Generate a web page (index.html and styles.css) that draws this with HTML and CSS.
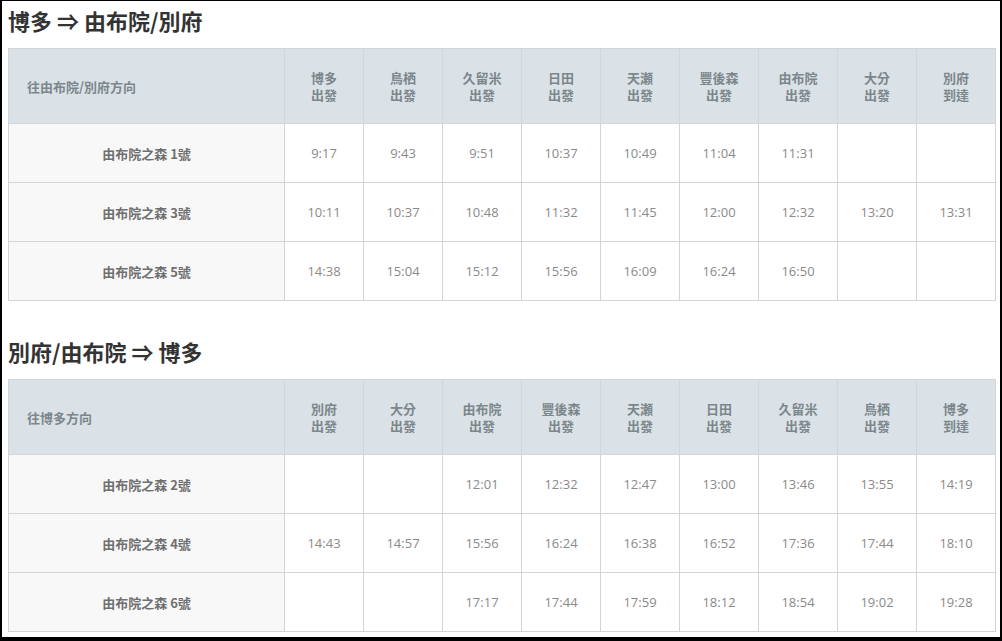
FILE: index.html
```html
<!DOCTYPE html>
<html lang="zh-Hant">
<head>
<meta charset="utf-8">
<title>由布院之森 時刻表</title>
<link rel="stylesheet" href="styles.css">
</head>
<body>
<div class="frame">
  <h2 class="title">博多 ⇒ 由布院/別府</h2>
  <table class="timetable">
    <colgroup><col class="c-name"><col span="9" class="c-time"></colgroup>
    <thead>
      <tr>
        <th class="dir">往由布院/別府方向</th>
        <th>博多<br>出發</th>
        <th>鳥栖<br>出發</th>
        <th>久留米<br>出發</th>
        <th>日田<br>出發</th>
        <th>天瀬<br>出發</th>
        <th>豐後森<br>出發</th>
        <th>由布院<br>出發</th>
        <th>大分<br>出發</th>
        <th>別府<br>到達</th>
      </tr>
    </thead>
    <tbody>
      <tr><td class="name">由布院之森 1號</td><td>9:17</td><td>9:43</td><td>9:51</td><td>10:37</td><td>10:49</td><td>11:04</td><td>11:31</td><td></td><td></td></tr>
      <tr><td class="name">由布院之森 3號</td><td>10:11</td><td>10:37</td><td>10:48</td><td>11:32</td><td>11:45</td><td>12:00</td><td>12:32</td><td>13:20</td><td>13:31</td></tr>
      <tr><td class="name">由布院之森 5號</td><td>14:38</td><td>15:04</td><td>15:12</td><td>15:56</td><td>16:09</td><td>16:24</td><td>16:50</td><td></td><td></td></tr>
    </tbody>
  </table>

  <h2 class="title title-second">別府/由布院 ⇒ 博多</h2>
  <table class="timetable">
    <colgroup><col class="c-name"><col span="9" class="c-time"></colgroup>
    <thead>
      <tr>
        <th class="dir">往博多方向</th>
        <th>別府<br>出發</th>
        <th>大分<br>出發</th>
        <th>由布院<br>出發</th>
        <th>豐後森<br>出發</th>
        <th>天瀬<br>出發</th>
        <th>日田<br>出發</th>
        <th>久留米<br>出發</th>
        <th>鳥栖<br>出發</th>
        <th>博多<br>到達</th>
      </tr>
    </thead>
    <tbody>
      <tr><td class="name">由布院之森 2號</td><td></td><td></td><td>12:01</td><td>12:32</td><td>12:47</td><td>13:00</td><td>13:46</td><td>13:55</td><td>14:19</td></tr>
      <tr><td class="name">由布院之森 4號</td><td>14:43</td><td>14:57</td><td>15:56</td><td>16:24</td><td>16:38</td><td>16:52</td><td>17:36</td><td>17:44</td><td>18:10</td></tr>
      <tr><td class="name">由布院之森 6號</td><td></td><td></td><td>17:17</td><td>17:44</td><td>17:59</td><td>18:12</td><td>18:54</td><td>19:02</td><td>19:28</td></tr>
    </tbody>
  </table>
</div>
</body>
</html>
```

FILE: styles.css
```css
html, body {
  margin: 0;
  padding: 0;
  background: #ffffff;
}

body {
  font-family: "Noto Sans CJK TC", "Noto Sans", sans-serif;
}

.frame {
  box-sizing: border-box;
  width: 1002px;
  height: 641px;
  overflow: hidden;
  border-style: solid;
  border-color: #000000;
  border-width: 1px 2px 4px 2px;
  padding: 4px 5px 0 6px;
  background: #ffffff;
}

.title {
  margin: 0 0 13px 0;
  font-size: 22px;
  line-height: 30px;
  font-weight: 700;
  color: #333333;
}

.title-second {
  margin-top: 35px;
}

.timetable {
  width: 987px;
  border-collapse: collapse;
  table-layout: fixed;
  border: 1px solid #cfd4d7;
}

.c-name {
  width: 276px;
}

.c-time {
  width: 79px;
}

.timetable th,
.timetable td {
  border: 1px solid #d2d6d8;
  padding: 0;
  text-align: center;
  vertical-align: middle;
  font-size: 13px;
}

.timetable thead tr {
  height: 75px;
}

.timetable th {
  background: #dae2e7;
  color: #7c868b;
  font-weight: 700;
  line-height: 17px;
}

.timetable th.dir {
  text-align: left;
  padding-left: 18px;
}

.timetable tbody tr {
  height: 59px;
}

.timetable td {
  font-family: "Open Sans", "Noto Sans CJK TC", sans-serif;
  color: #8a8a8a;
  font-weight: 400;
  background: #ffffff;
}

.timetable td.name {
  font-family: "Noto Sans CJK TC", "Noto Sans", sans-serif;
  background: #f8f8f8;
  color: #6f6f6f;
  font-weight: 700;
}
```
